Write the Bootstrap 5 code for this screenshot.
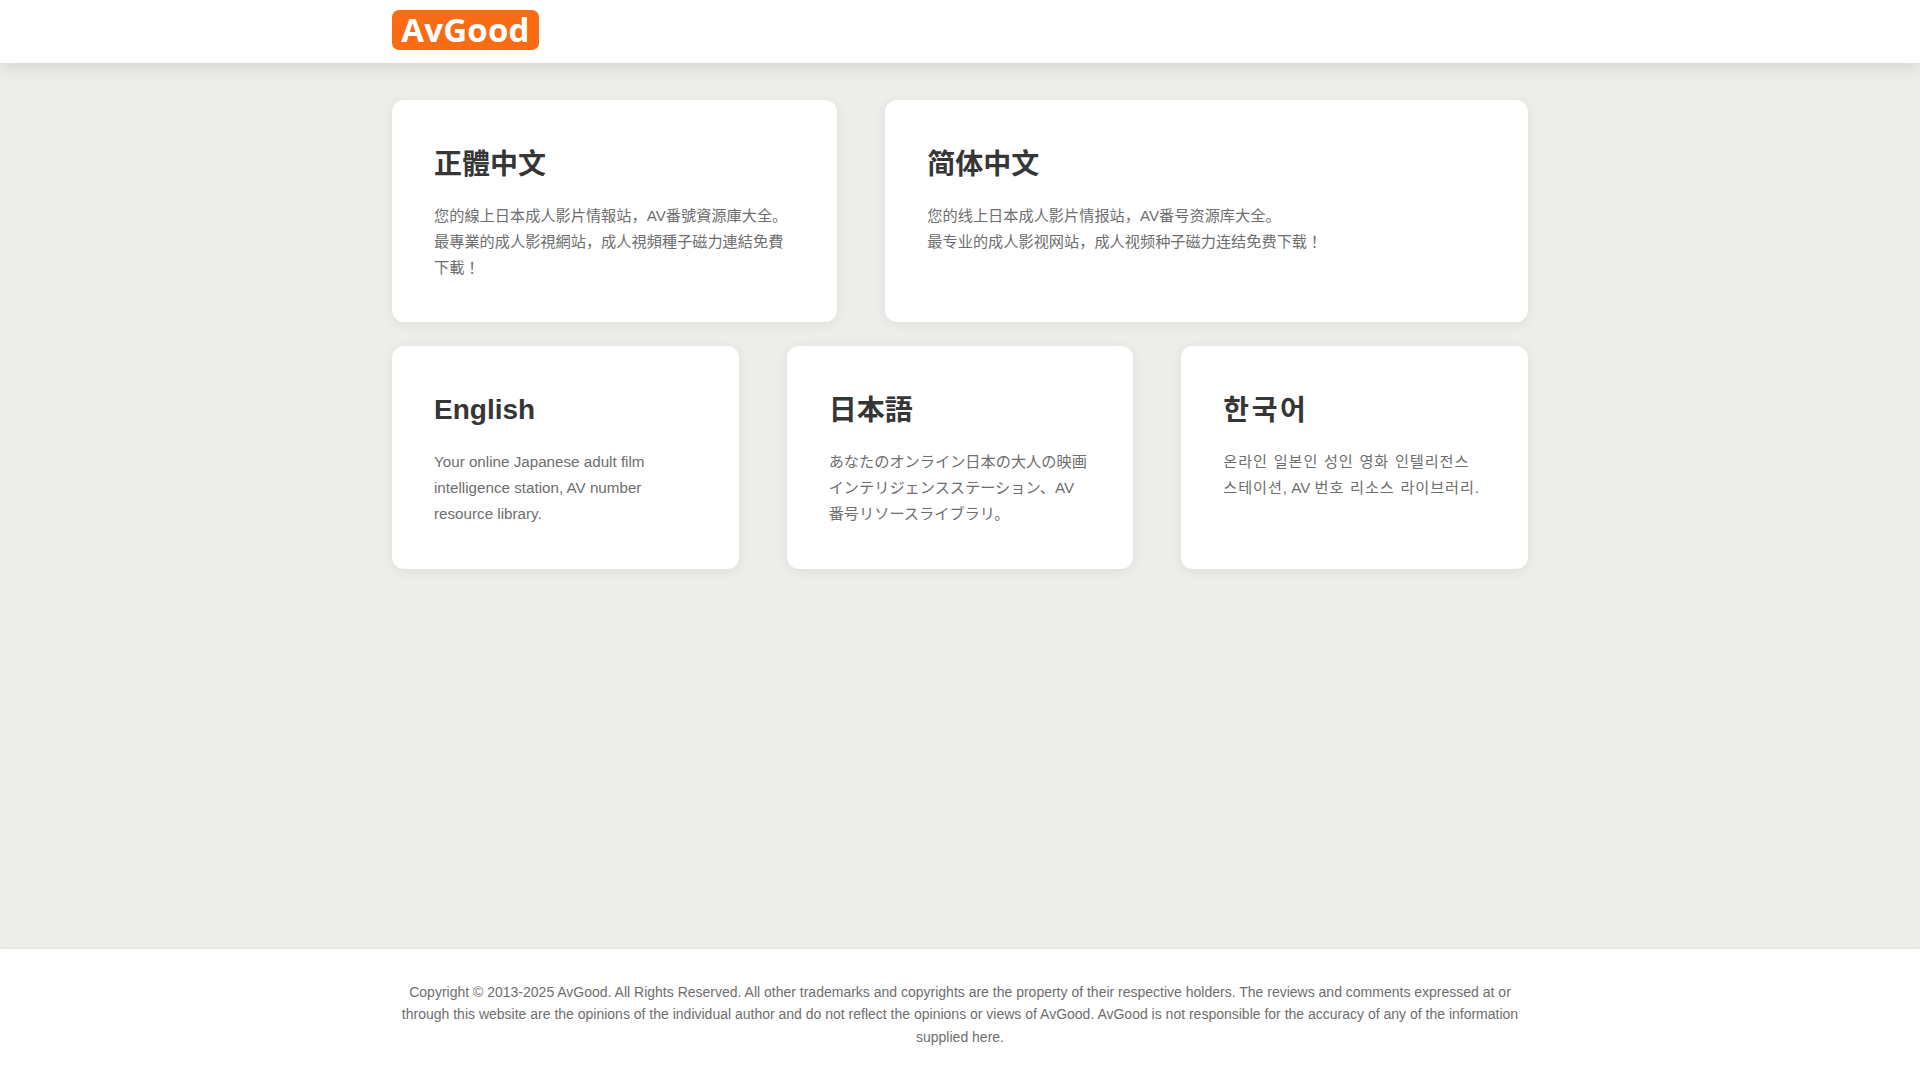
<!doctype html>
<html lang="zh-Hans"><head><meta charset="utf-8"><title>AvGood</title>
<link href="https://cdn.jsdelivr.net/npm/bootstrap@5.3.0/dist/css/bootstrap.min.css" rel="stylesheet">
<style>
html,body{height:100%}
body{background:#edeee9;font-family:"Liberation Sans","Noto Sans CJK SC",sans-serif;color:#6e6e6e;text-spacing-trim:space-all}
.page-wrap{min-height:1080px}
.top-bar{height:63px;background:#fff;box-shadow:0 2px 18px rgba(0,0,0,.13);padding-top:10px}
.inner-box{width:1136px}
.logo-box{width:147px;height:40px;background:#f96c14;color:#fff;border-radius:7px;font:700 33px/39px "Open Sans",sans-serif;letter-spacing:.2px}
.main-box{padding-top:37px}
.lang-card{background:#fff;border-radius:12px;box-shadow:0 2px 12px rgba(0,0,0,.07);padding:48px 42px 0;height:222px;display:block;text-decoration:none}
.lang-card-tall{height:223px}
.lang-title{font-size:28px;font-weight:700;line-height:1.2;color:#363636;margin:0 0 21px}
.en-title{line-height:32px;margin-bottom:22.6px}
.lang-text{font-size:15.2px;line-height:26px;color:#6e6e6e;margin:0}
.kr-title{letter-spacing:2.6px}
.kr-text{letter-spacing:.9px;word-spacing:.6px;word-break:keep-all}
.kr-latin{letter-spacing:0;word-spacing:0}
.foot-bar{background:#fff;height:131px;padding-top:32px;box-shadow:0 -1px 2px rgba(0,0,0,.04)}
.foot-text{font-size:14px;line-height:22.4px;color:#6e6e6e;margin:0}
</style></head>
<body>
<div class="page-wrap d-flex flex-column">
<header class="top-bar d-flex justify-content-center">
<div class="inner-box"><div class="logo-box text-center">AvGood</div></div>
</header>
<main class="main-box flex-grow-1 d-flex justify-content-center">
<div class="inner-box">
<div class="row gx-5 gy-4">
<div class="col-5"><a class="lang-card" href="#"><h2 class="lang-title">正體中文</h2><p class="lang-text">您的線上日本成人影片情報站，AV番號資源庫大全。<br>最專業的成人影視網站，成人視頻種子磁力連結免費<br>下載<span lang="zh-Hant">！</span></p></a></div>
<div class="col-7"><a class="lang-card" href="#"><h2 class="lang-title">简体中文</h2><p class="lang-text">您的线上日本成人影片情报站，AV番号资源库大全。<br>最专业的成人影视网站，成人视频种子磁力连结免费下载<span lang="zh-Hant">！</span></p></a></div>
<div class="col-4"><a class="lang-card lang-card-tall" href="#"><h2 class="lang-title en-title" lang="en">English</h2><p class="lang-text" lang="en">Your online Japanese adult film intelligence station, AV number resource library.</p></a></div>
<div class="col-4"><a class="lang-card lang-card-tall" href="#"><h2 class="lang-title" lang="ja">日本語</h2><p class="lang-text" lang="ja">あなたのオンライン日本の大人の映画インテリジェンスステーション、AV<br>番号リソースライブラリ。</p></a></div>
<div class="col-4"><a class="lang-card lang-card-tall" href="#"><h2 class="lang-title kr-title" lang="ko">한국어</h2><p class="lang-text kr-text" lang="ko">온라인 일본인 성인 영화 인텔리전스<br>스테이션<span class="kr-latin">, AV </span>번호 리소스 라이브러리.</p></a></div>
</div>
</div>
</main>
<footer class="foot-bar d-flex justify-content-center">
<div class="inner-box"><p class="foot-text text-center" lang="en">Copyright © 2013-2025 AvGood. All Rights Reserved. All other trademarks and copyrights are the property of their respective holders. The reviews and comments expressed at or through this website are the opinions of the individual author and do not reflect the opinions or views of AvGood. AvGood is not responsible for the accuracy of any of the information supplied here.</p></div>
</footer>
</div>
<script src="https://cdn.jsdelivr.net/npm/bootstrap@5.3.0/dist/js/bootstrap.bundle.min.js"></script>
</body></html>
